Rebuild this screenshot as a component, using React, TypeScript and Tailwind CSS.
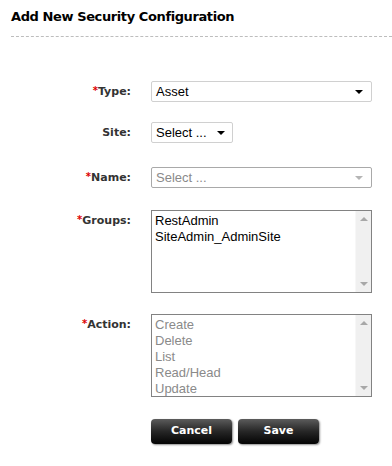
const labelFont = "font-['DejaVu_Sans',Verdana,sans-serif]";
const fieldFont = "font-['Liberation_Sans',Arial,sans-serif]";

const Caret = ({ light }: { light?: boolean }) => (
  <span
    className={`w-0 h-0 border-l-[4px] border-r-[4px] border-t-[4px] border-l-transparent border-r-transparent ${
      light ? "border-t-[#b5b5b5]" : "border-t-black"
    }`}
  />
);

const Label = ({ text, required }: { text: string; required?: boolean }) => (
  <div
    className={`w-[131px] shrink-0 text-right text-[11px] font-bold text-[#333] leading-none ${labelFont}`}
  >
    {required && <span className="text-[#d00] text-[10px] relative -top-[1px]">*</span>}
    {text}
  </div>
);

const Scroll = () => (
  <div className="w-[16px] bg-[#f0f0f0] flex flex-col items-center justify-between py-[6px] border-l border-[#f7f7f7]">
    <span className="w-0 h-0 border-l-[4px] border-r-[4px] border-b-[4px] border-l-transparent border-r-transparent border-b-[#a8a8a8]" />
    <span className="w-0 h-0 border-l-[4px] border-r-[4px] border-t-[4px] border-l-transparent border-r-transparent border-t-[#a8a8a8]" />
  </div>
);

const ListBox = ({ items, muted }: { items: string[]; muted?: boolean }) => (
  <div className="w-[221px] h-[83px] border border-[#828282] bg-white flex">
    <div
      className={`flex-1 pl-[3px] pt-[2px] text-[13px] leading-[16px] ${fieldFont} ${
        muted ? "text-[#8a8a8a]" : "text-black"
      }`}
    >
      {items.map((i) => (
        <div key={i}>{i}</div>
      ))}
    </div>
    <Scroll />
  </div>
);

const Button = ({ text }: { text: string }) => (
  <button
    className={`w-[81px] h-[25px] rounded-[4px] text-white text-[11px] font-bold bg-gradient-to-b from-[#5c5c5c] via-[#262626] to-[#050505] shadow-[1px_1px_2px_rgba(0,0,0,0.45)] ${labelFont}`}
  >
    {text}
  </button>
);

export default function App() {
  return (
    <div className="w-[392px] h-[466px] bg-white overflow-hidden">
      <div className="pl-[11px] pt-[8px]">
        <h1 className={`text-[13px] font-bold text-black leading-[18px] tracking-[-0.4px] ${labelFont}`}>
          Add New Security Configuration
        </h1>
        <div className="mt-[10px] border-t border-dashed border-[#bdbdbd]" />
      </div>

      <div className="flex flex-col mt-[44px]">
        <div className="flex items-center gap-[20px]">
          <Label text="Type:" required />
          <div
            className={`w-[221px] h-[21px] border border-[#d0d0d0] rounded-[2px] flex items-center justify-between pl-[4px] pr-[8px] text-[13px] text-black ${fieldFont}`}
          >
            Asset
            <Caret />
          </div>
        </div>

        <div className="flex items-center gap-[20px] mt-[20px]">
          <Label text="Site:" />
          <div
            className={`w-[82px] h-[21px] border border-[#d0d0d0] rounded-[2px] flex items-center justify-between pl-[4px] pr-[7px] text-[13px] text-black ${fieldFont}`}
          >
            Select ...
            <Caret />
          </div>
        </div>

        <div className="flex items-center gap-[20px] mt-[24px]">
          <Label text="Name:" required />
          <div
            className={`w-[221px] h-[21px] border border-[#a9a9a9] rounded-[2px] flex items-center justify-between pl-[4px] pr-[8px] text-[13px] text-[#8a8a8a] ${fieldFont}`}
          >
            Select ...
            <Caret light />
          </div>
        </div>

        <div className="flex items-start gap-[20px] mt-[22px]">
          <div className="pt-[5px]">
            <Label text="Groups:" required />
          </div>
          <ListBox items={["RestAdmin", "SiteAdmin_AdminSite"]} />
        </div>

        <div className="flex items-start gap-[20px] mt-[21px]">
          <div className="pt-[5px]">
            <Label text="Action:" required />
          </div>
          <ListBox muted items={["Create", "Delete", "List", "Read/Head", "Update"]} />
        </div>

        <div className="flex gap-[6px] pl-[151px] mt-[22px]">
          <Button text="Cancel" />
          <Button text="Save" />
        </div>
      </div>
    </div>
  );
}
